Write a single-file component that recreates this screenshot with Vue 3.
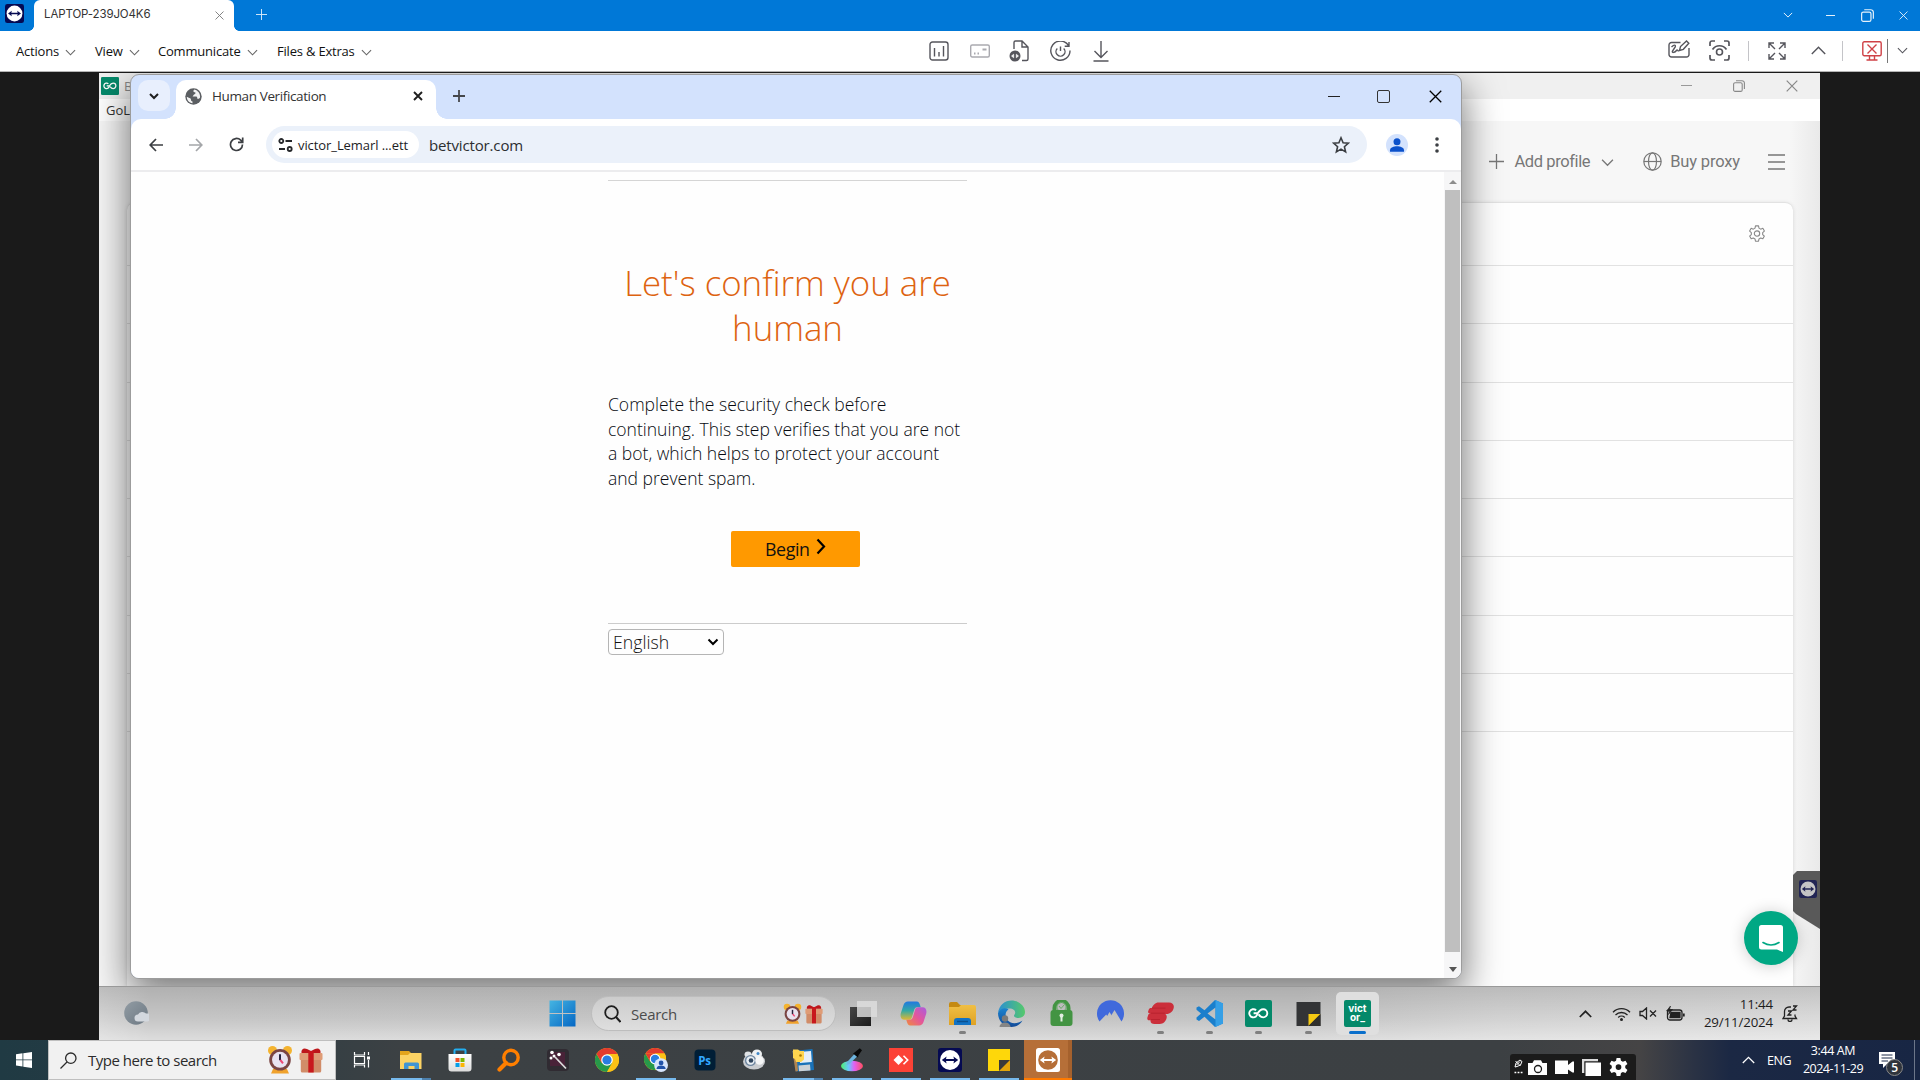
<script setup>
const menus = [
  { label: 'Actions', w: 79 },
  { label: 'View', w: 63 },
  { label: 'Communicate', w: 119 },
  { label: 'Files & Extras', w: 110 },
]
const remoteApps = [
  { icon: 'taskview11' },
  { icon: 'copilot' },
  { icon: 'explorer11', run: true },
  { icon: 'edge' },
  { icon: 'lock' },
  { icon: 'nord' },
  { icon: 'express', run: true },
  { icon: 'vscode', run: true },
  { icon: 'gologin', run: true },
  { icon: 'notedark', run: true },
]
const localApps = [
  { icon: 'taskview10' },
  { icon: 'explorer10', run: true, multi: true },
  { icon: 'store' },
  { icon: 'everything' },
  { icon: 'wand' },
  { icon: 'chrome' },
  { icon: 'chromeuser', run: true },
  { icon: 'photoshop', text: 'Ps' },
  { icon: 'camera3d' },
  { icon: 'floppy', run: true, multi: true },
  { icon: 'picker', run: true },
  { icon: 'anydesk', run: true },
  { icon: 'teamviewer', run: true },
  { icon: 'noteyellow', run: true },
]
</script>

<template>
  <svg class="sprite" width="0" height="0" aria-hidden="true">
    <defs>
      <linearGradient id="gWin" x1="0" y1="0" x2="1" y2="1"><stop offset="0" stop-color="#45b5e2" /><stop offset="1" stop-color="#0567c4" /></linearGradient>
      <linearGradient id="gFold" x1="0" y1="0" x2="0" y2="1"><stop offset="0" stop-color="#f0bf45" /><stop offset="1" stop-color="#dfa224" /></linearGradient>
      <linearGradient id="gEdge" x1="0" y1="0" x2="1" y2="0"><stop offset="0" stop-color="#2b8fd2" /><stop offset="1" stop-color="#55c96b" /></linearGradient>
      <linearGradient id="gEdge2" x1="0" y1="0" x2="0" y2="1"><stop offset="0" stop-color="#1c83cf" /><stop offset="1" stop-color="#124a98" /></linearGradient>
      <linearGradient id="gCopA" x1="0" y1="0" x2="0" y2="1"><stop offset="0" stop-color="#2078e0" /><stop offset=".5" stop-color="#33a9a5" /><stop offset="1" stop-color="#e0b832" /></linearGradient>
      <linearGradient id="gCopB" x1="1" y1="0" x2="0" y2="1"><stop offset="0" stop-color="#a95be0" /><stop offset=".5" stop-color="#e4569b" /><stop offset="1" stop-color="#f08b3c" /></linearGradient>
      <linearGradient id="gMoon" x1="0" y1="0" x2="1" y2="1"><stop offset="0" stop-color="#929ca4" /><stop offset="1" stop-color="#6c7882" /></linearGradient>
      <linearGradient id="gRain" x1="0" y1="0" x2="1" y2="0"><stop offset="0" stop-color="#4ef06f" /><stop offset=".35" stop-color="#67c7ff" /><stop offset=".6" stop-color="#e061f2" /><stop offset="1" stop-color="#ff4d5e" /></linearGradient>
      <linearGradient id="gDark" x1="0" y1="0" x2="1" y2="1"><stop offset="0" stop-color="#454545" /><stop offset="1" stop-color="#1c1c1c" /></linearGradient>
      <linearGradient id="gStore" x1="0" y1="0" x2="0" y2="1"><stop offset="0" stop-color="#fff" /><stop offset="1" stop-color="#dcdcdc" /></linearGradient>
    </defs>

    <symbol id="teamviewer" viewBox="0 0 24 24"><rect width="24" height="24" rx="3" fill="#050a52" /><circle cx="12" cy="12" r="10" fill="#fff" /><path d="M3.8 12 8.6 8.4 8 10.9h8l-.6-2.5L20.2 12l-4.8 3.6.6-2.5H8l.6 2.5z" fill="#050a52" /></symbol>
    <symbol id="tvorange" viewBox="0 0 24 24"><rect width="24" height="24" rx="2.5" fill="#fff" /><circle cx="12" cy="12" r="9.8" fill="#b66f38" /><path d="M3.8 12 8.6 8.4 8 10.9h8l-.6-2.5L20.2 12l-4.8 3.6.6-2.5H8l.6 2.5z" fill="#fff" /></symbol>
    <symbol id="gologin" viewBox="0 0 27 27"><rect width="27" height="27" rx="2" fill="#04896a" /><path d="M8.600 13.300h3.900a4.100 4.100 0 1 1-1.400-3.100M12.500 13.500c1.500-2.500 3-4.300 5.700-4.300a4.100 4.100 0 1 1 0 8.200c-2.200 0-3.400-1.300-4.600-3" fill="none" stroke="#fff" stroke-width="1.900" /></symbol>
    <symbol id="taskview11" viewBox="0 0 27 27"><path d="M0 7h21v19H0z" fill="url(#gDark)" /><path d="M7 1h20v16H7z" fill="#dedede" opacity=".82" /></symbol>
    <symbol id="copilot" viewBox="0 0 27 27"><path d="M8 1.500h8.500c2.500 0 3 2 3.700 4l.5 1.700h-3.500c-2 0-2.700 1.500-3.200 3.300l-2 6.500c-.6 2-1.300 2.800-3.400 2.800H4.500C1 19.800 0 16.500.8 13.300L3.500 5C4.300 2.700 5.600 1.500 8 1.500z" fill="url(#gCopA)" /><path d="M19 25.500h-8.500c-2.500 0-3-2-3.700-4l-.5-1.700h3.500c2 0 2.700-1.500 3.200-3.300l2-6.500c.6-2 1.300-2.800 3.400-2.800h4.100c3.500 0 4.500 3.300 3.700 6.500L23.500 22c-.8 2.300-2.100 3.500-4.500 3.500z" fill="url(#gCopB)" /></symbol>
    <symbol id="explorer11" viewBox="0 0 27 27"><path d="M0 4a2 2 0 0 1 2-2h6l3 3h14v4H0z" fill="#c58a12" /><path d="M0 7h10l2-2h13a2 2 0 0 1 2 2v18H0z" fill="url(#gFold)" /><path d="M5 25v-4a3 3 0 0 1 3-3h11a3 3 0 0 1 3 3v4z" fill="#1272c4" /><path d="M8 21.500h11" stroke="#0b508f" stroke-width="1.500" /></symbol>
    <symbol id="edge" viewBox="0 0 27 27"><path d="M0 13C1 5 7 .5 13.500.5 21 .5 27 6 27 12c0 4-3.500 6-6.500 6-3 0-4.500-1-4.500-2.300 0-1 1.200-1.400 1.200-3.200 0-2-2.200-4-5.700-4C6 8.500 1.500 10 0 13z" fill="url(#gEdge)" /><path d="M0 13c1.500-4 6-5.500 9-4.500 1 .4 1.500 1 1.500 1-3 2-4 6-1.500 10 3 4.500 10 5 15.500 1C22 25 18 27 13.500 27 6 27 0 21 0 13z" fill="url(#gEdge2)" /><circle cx="7" cy="18.500" r="3.200" fill="#7a7a7a" /><path d="M1.500 27a5.500 4.500 0 0 1 11 0z" fill="#858585" /></symbol>
    <symbol id="lock" viewBox="0 0 27 27"><path d="M6.500 11V8a7 7 0 0 1 14 0v3" fill="none" stroke="#439443" stroke-width="4" /><circle cx="13.500" cy="7" r="4.600" fill="none" stroke="#6aa96a" stroke-width="1" /><path d="m11 6 2 2.500 3.500-4" fill="none" stroke="#6aa96a" /><rect x="2.500" y="10" width="22" height="16" rx="3" fill="#439443" /><circle cx="13.500" cy="15.500" r="2" fill="#e3eee3" /><path d="M12.500 16h2v5.500h-2z" fill="#e3eee3" /></symbol>
    <symbol id="nord" viewBox="0 0 27 27"><path d="M2.500 21.500A13.500 13.500 0 1 1 24.500 21.500L17.500 10l-3 5 .5 1-2.500-4-2.300 4-1-1.500z" fill="#4069dc" /></symbol>
    <symbol id="express" viewBox="0 0 27 27"><path d="M11.500 2.500H22c3.500 0 5.400 2.500 4.700 5.500-.8 3.600-3.700 6-7.200 6h-1.200c1.300 1 1.700 2.400 1.300 4-.7 3.200-3.200 6-6.900 6H7.500c-2.600 0-4.300-1.200-4-3.800H2.200C.6 20.200 0 19 .4 17.600l.8-2.500c.4-1.200 1.300-1.900 2.600-1.900H2.300c-1.100 0-1.500-.8-1.100-1.900l.6-1.700c.4-1 1.100-1.500 2.200-1.500h.8C5.900 5 8.400 2.500 11.500 2.500z" fill="#cb2f3b" /><path d="M5 8.100h13.500M3.800 13.200h14M4 19.500h9" fill="none" stroke="#b9232f" stroke-width="1" /></symbol>
    <symbol id="vscode" viewBox="0 0 27 27"><path d="M19 0 8.500 10.300 3 6.200.5 7.500v2.200L5 13.500.5 17.500v2L3 21l5.500-4.300L19 27l8-3.500v-20zM19.500 7.500v12L11.500 13.500z" fill="#1b7fcc" /><path d="m19.500 0 7.500 3.500v20L19.500 27z" fill="#359fe6" /></symbol>
    <symbol id="notedark" viewBox="0 0 27 27"><path d="M1.500 2h24v24h-24z" fill="#333436" /><path d="M13.500 14h12L13.500 26z" fill="#f5c913" /><path d="M25.500 14v12h-12z" fill="#302f2c" /></symbol>
    <symbol id="win11" viewBox="0 0 27 27"><path d="M.5.5h12.500V13H.5zM14 .5h12.500V13H14zM.5 14h12.500v12.500H.5zM14 14h12.500v12.500H14z" fill="url(#gWin)" /></symbol>
    <symbol id="win10" viewBox="0 0 16 16"><path d="m0 2.200 6.500-.9v6.200H0zM7.300 1.200 16 0v7.500H7.300zM0 8.300h6.500v6.200L0 13.600zM7.300 8.300H16V16l-8.700-1.300z" fill="#fff" /></symbol>
    <symbol id="clock" viewBox="0 0 26 28"><circle cx="5.500" cy="4.500" r="4.500" fill="#f4b32f" /><circle cx="20.500" cy="4.500" r="4.500" fill="#f4b32f" /><path d="M4 27.500 6 23h14l2 4.500z" fill="#f0a22c" /><circle cx="13" cy="13.800" r="10.800" fill="#7a4443" /><circle cx="13" cy="13.800" r="8" fill="#e8e2f0" /><path d="M13 8.300v6" stroke="#28243f" stroke-width="2" /><path d="m13.300 14 2.700 3.300" stroke="#ed4774" stroke-width="2" /></symbol>
    <symbol id="gift" viewBox="0 0 24 26"><path d="M1.800 10h20.400v14a1.500 1.500 0 0 1-1.500 1.500H3.300A1.500 1.500 0 0 1 1.800 24z" fill="#d18c68" /><rect x=".5" y="6" width="23" height="7" rx="1" fill="#df9c76" /><path d="M2.500 6C1.800 2 5 .5 8 2l4 2 4-2c3-1.500 6.200 0 5.500 4z" fill="#bd171b" /><path d="M9.300 4h5.400v21.500H9.300z" fill="#c8191d" /></symbol>
    <symbol id="taskview10" viewBox="0 0 24 24"><path d="M4.500 4v3h10V4M4.500 19.500V17h10v2.500M4.500 8.500h10v7h-10zM18.500 4v3M18.500 12v7.500" fill="none" stroke="#fff" stroke-width="1.200" /><path d="M17 8.500h3v3h-3z" fill="#fff" /></symbol>
    <symbol id="explorer10" viewBox="0 0 24 24"><path d="M1 3h9l2 2h10v6H1z" fill="#e4a51c" /><path d="M1 7h8l2-2h11.500v16H1z" fill="#fcd364" /><path d="M5 21v-5a1.500 1.500 0 0 1 1.500-1.500h12A1.500 1.500 0 0 1 20 16v5h-4.500v-3h-6v3z" fill="#4095d4" /></symbol>
    <symbol id="store" viewBox="0 0 24 24"><path d="M6.500 6.500V2.500a1 1 0 0 1 1-1h9a1 1 0 0 1 1 1v4" fill="none" stroke="#23aef0" stroke-width="2" /><path d="M.5 6h23v14.500a3 3 0 0 1-3 3h-17a3 3 0 0 1-3-3z" fill="url(#gStore)" /><path d="M7.500 10h4v4h-4z" fill="#f2502a" /><path d="M12.500 10h4v4h-4z" fill="#7db800" /><path d="M7.500 15h4v4h-4z" fill="#069fe8" /><path d="M12.500 15h4v4h-4z" fill="#fbb605" /></symbol>
    <symbol id="everything" viewBox="0 0 24 24"><circle cx="14" cy="9.500" r="7.200" fill="none" stroke="#ff7f00" stroke-width="3.400" /><path d="m9 15-6.500 6.500" stroke="#ff7f00" stroke-width="4.200" stroke-linecap="round" /></symbol>
    <symbol id="wand" viewBox="0 0 24 24"><rect x="1" y="1" width="22" height="22" rx="4" fill="#302b32" /><path d="M4 4h15v14H4z" fill="#5a1c3c" opacity=".6" /><path d="m9 9 11 11.500" stroke="#dcdcdc" stroke-width="1.800" /><circle cx="8" cy="8" r="1.500" fill="#fff" /><circle cx="13" cy="6.500" r="1.800" fill="#fff" /><circle cx="5" cy="10" r="1.500" fill="#fff" /><circle cx="6" cy="4.500" r="1.800" fill="#fff" /></symbol>
    <symbol id="chrome" viewBox="0 0 24 24"><circle cx="12" cy="12" r="12" fill="#fbc116" /><path d="M1.600 6A12 12 0 0 1 22.400 6H12z" fill="#e33b2e" /><path d="M1.600 6a12 12 0 0 0 10.400 18l5.200-9L12 6 6.800 15z" fill="#27994a" /><path d="M22.400 6H12l5.200 9L12 24A12 12 0 0 0 22.400 6z" fill="#fbc116" /><path d="M1.600 6 6.800 15 12 6z" fill="#e33b2e" /><circle cx="12" cy="12" r="5.800" fill="#fff" /><circle cx="12" cy="12" r="4.600" fill="#2a7de1" /></symbol>
    <symbol id="chromeuser" viewBox="0 0 26 26"><use href="#chrome" width="24" height="24" /><circle cx="18.500" cy="18.500" r="7.500" fill="#d7e5fc" /><circle cx="18.500" cy="16.200" r="2.600" fill="#2152a9" /><path d="M13.500 22.800c0-2.600 2.500-3.800 5-3.800s5 1.200 5 3.800z" fill="#2152a9" /></symbol>
    <symbol id="photoshop" viewBox="0 0 24 24"><rect x="1.500" y="1.500" width="21" height="21" rx="4" fill="#001e36" /></symbol>
    <symbol id="camera3d" viewBox="0 0 24 24"><ellipse cx="12" cy="13.500" rx="11" ry="8" fill="#c9ccd0" /><ellipse cx="15" cy="6" rx="5" ry="4.500" fill="#eef0f2" /><ellipse cx="6" cy="6.500" rx="3.500" ry="3" fill="#dfe2e5" /><circle cx="8.500" cy="12.500" r="5.600" fill="#6e86a0" /><circle cx="8.500" cy="12.500" r="4.200" fill="#e8eef3" /><circle cx="9" cy="12.500" r="2.300" fill="#30465f" /><ellipse cx="17.500" cy="12.500" rx="4.300" ry="4.300" fill="#f5f6f7" /><circle cx="16" cy="5.500" r="1.500" fill="#4087c7" /></symbol>
    <symbol id="floppy" viewBox="0 0 24 24"><path d="m1.500 3 20-2 1.500 21-18 1.500z" fill="#1a72b8" /><path d="m8 4 12-1 .8 11L9 15z" fill="#e5eff8" /><path d="M7.500 17.500 19 16.500l.5 6-11.500.8z" fill="#cdd2d6" /><path d="m1.500 3 3.500-.4L7 23l-2.500.4z" fill="#b4854f" /><path d="M2 1.500h5L9 3h4v8.500l-3 2.500H5l-1-3-2-1z" fill="#ffd64f" /><circle cx="9.500" cy="7.500" r="1.300" fill="#a87800" /></symbol>
    <symbol id="picker" viewBox="0 0 24 24"><ellipse cx="12" cy="18" rx="11" ry="5.200" fill="url(#gRain)" /><path d="m6.500 17 .8-3.200L14.500 6l2.600 2.600-7.600 7.500z" fill="#6db5e0" /><path d="m13 5.500 1.800-1.300 5-4 2.200 2-3.500 5-.5 2.300z" fill="#090909" /></symbol>
    <symbol id="anydesk" viewBox="0 0 24 24"><path d="M0 0h24v24H0z" fill="#fc4236" /><path d="m9.500 7 5 5-5 5-5-5z" fill="#fff" /><path d="m13 7.800 4.200 4.200-4.200 4.200" fill="none" stroke="#fff" stroke-width="1.600" transform="translate(1.500)" /></symbol>
    <symbol id="noteyellow" viewBox="0 0 24 24"><path d="M1 1h22v22H1z" fill="#fed70a" /><path d="M12 12h11v11H12z" fill="#e3a50a" /><path d="M12 12h11L12 23z" fill="#39393a" /></symbol>
    <symbol id="chev" viewBox="0 0 12 12"><path d="m1 3.500 5 5 5-5" fill="none" stroke="currentColor" stroke-width="1.200" /></symbol>
    <symbol id="x" viewBox="0 0 12 12"><path d="m.7.700 10.600 10.600M11.300.7.700 11.300" fill="none" stroke="currentColor" stroke-width="1.200" /></symbol>
    <symbol id="plus" viewBox="0 0 14 14"><path d="M7 0v14M0 7h14" fill="none" stroke="currentColor" stroke-width="1.200" /></symbol>
    <symbol id="restore" viewBox="0 0 12 12"><rect x=".6" y="2.800" width="8.600" height="8.600" rx="1.500" fill="none" stroke="currentColor" stroke-width="1.100" /><path d="M3 .7h6a2.400 2.400 0 0 1 2.400 2.400V9" fill="none" stroke="currentColor" stroke-width="1.100" /></symbol>
    <symbol id="gear" viewBox="0 0 20 20"><path d="M8.300 1h3.400l.5 2.500 1.900 1.100 2.400-.9 1.700 3-1.900 1.700v2.200l1.900 1.700-1.700 3-2.400-.9-1.900 1.100-.5 2.500H8.300l-.5-2.500-1.900-1.100-2.400.9-1.700-3 1.900-1.700V8.400L1.800 6.700l1.700-3 2.400.9 1.900-1.100z" fill="none" stroke="currentColor" stroke-width="1.200" stroke-linejoin="round" /><circle cx="10" cy="9.500" r="3" fill="none" stroke="currentColor" stroke-width="1.200" /></symbol>
  </svg>

  <div class="screen">
    <header class="tvbar">
      <svg class="tvlogo" width="19" height="19"><use href="#teamviewer" /></svg>
      <div class="tvtab"><span class="laptop">LAPTOP-239JO4K6</span><svg width="9" height="9"><use href="#x" /></svg></div>
      <svg class="tvplus" width="11" height="11"><use href="#plus" /></svg>
      <div class="tvctl">
        <svg width="10" height="10"><use href="#chev" /></svg>
        <i class="dash"></i>
        <svg width="13" height="13"><use href="#restore" /></svg>
        <svg width="9" height="9"><use href="#x" /></svg>
      </div>
    </header>

    <nav class="tvtools">
      <div class="menus">
        <div v-for="m in menus" :key="m.label" class="menu" :style="{ width: m.w + 'px' }">{{ m.label }}<svg width="11" height="11"><use href="#chev" /></svg></div>
      </div>
      <div class="mid">
        <svg width="20" height="20" viewBox="0 0 20 20"><rect x="1" y="1" width="18" height="18" rx="2.500" /><path d="M5.500 7v8.500M10 11v4.500M14.500 5v10.500" /></svg>
        <svg class="pale" width="20" height="20" viewBox="0 0 20 20"><rect x=".7" y="4" width="18.600" height="12" rx="1.500" /><path d="M4 12.500h1.500M7.500 12.500H9M12.500 8.500h4" stroke-width="2" /></svg>
        <svg width="20" height="22" viewBox="0 0 20 22"><path d="M5 9V2.500A1.500 1.500 0 0 1 6.500 1H13l6 6v12a1.500 1.500 0 0 1-1.500 1.500H13M13 1v6h6" /><circle cx="6" cy="16" r="5.500" fill="#55555c" stroke="none" /><path d="m2.500 16 2.200-1.800v3.600zM9.500 16l-2.200-1.800v3.600z" fill="#fff" stroke="#fff" stroke-width=".6" /></svg>
        <svg width="21" height="21" viewBox="0 0 21 21"><path d="M18.500 4.500A9.600 9.600 0 1 0 20 9.500M19 1v4.300h-4.300M7.300 7.500a4.500 4.500 0 1 0 6.400 0M10.500 5.500V10" /></svg>
        <svg width="16" height="21" viewBox="0 0 16 21"><path d="M8 0v16M1.500 10 8 16.500 14.500 10M.5 20h15" /></svg>
      </div>
      <div class="right">
        <svg class="wb" width="22" height="19" viewBox="0 0 22 19"><path d="M12.500 2.500h-9A2.500 2.500 0 0 0 1 5v9.500A2.500 2.500 0 0 0 3.500 17h15a2.500 2.500 0 0 0 2.500-2.500V8M3.500 7c3.500-3.500 5-1.500 3 1L4.500 11c-1 2 2.200 1.800 3.500 0s1.800-.8 2.500.3M11.500 10.500l1-4L18.500 1l2.300 2.300-5.500 6z" /></svg>
        <svg class="eye" width="21" height="21" viewBox="0 0 21 21"><path d="M1 6V3a2 2 0 0 1 2-2h3M15 1h3a2 2 0 0 1 2 2v3M20 15v3a2 2 0 0 1-2 2h-3M6 20H3a2 2 0 0 1-2-2v-3M3.500 9.500c3.500-5 10.500-5 14 0" stroke-width="1.700" /><circle cx="10.500" cy="12" r="3" stroke-width="1.600" /></svg>
        <i class="vr"></i>
        <svg class="full" width="18" height="18" viewBox="0 0 18 18"><path d="M1 6V1h5M1 1l6 6M12 1h5v5M17 1l-6 6M17 12v5h-5M17 17l-6-6M6 17H1v-5M1 17l6-6" /></svg>
        <svg class="up" width="15" height="9" viewBox="0 0 15 9"><path d="m.8 8 6.700-6.700L14.200 8" /></svg>
        <i class="vr"></i>
        <svg class="mon" width="20" height="20" viewBox="0 0 20 20"><rect x=".8" y=".8" width="18.400" height="14" rx="1.500" /><path d="m5.500 3.500 9 9M14.500 3.500l-9 9M7.500 15v3.500M12.500 15v3.500M4.500 19h11" /></svg>
        <i class="vr dark"></i>
        <svg class="dn" width="11" height="11"><use href="#chev" /></svg>
      </div>
    </nav>

    <main class="remote">
      <div class="desktop">
        <section class="golo">
          <div class="gotitle">
            <svg width="18" height="18"><use href="#gologin" /></svg><span>Browser</span>
            <div class="goctl"><i class="dash"></i><svg width="12" height="12"><use href="#restore" /></svg><svg width="12" height="12"><use href="#x" /></svg></div>
          </div>
          <div class="gomenu">GoLogin</div>
          <div class="gobody">
            <div class="gobar">
              <svg width="15" height="15"><use href="#plus" /></svg><span class="addp">Add profile</span><svg class="gochev" width="13" height="13"><use href="#chev" /></svg>
              <svg class="globe" width="19" height="19" viewBox="0 0 19 19"><circle cx="9.500" cy="9.500" r="8.700" /><ellipse cx="9.500" cy="9.500" rx="4" ry="8.700" /><path d="M1 9.500h17" /></svg><span class="buyp">Buy proxy</span>
              <svg class="burger" width="17" height="16" viewBox="0 0 17 16"><path d="M0 1h17M0 8h17M0 15h17" /></svg>
            </div>
            <div class="card">
              <div class="row first"><svg width="18" height="18"><use href="#gear" /></svg></div>
              <div v-for="n in 8" :key="n" class="row"></div>
            </div>
          </div>
          <div class="tvside"><svg width="18" height="18"><use href="#teamviewer" /></svg></div>
          <div class="chat"><svg width="24" height="27" viewBox="0 0 24 27"><path d="M2.500 0h19A2.500 2.500 0 0 1 24 2.500V27l-6-2.500H2.500A2.500 2.500 0 0 1 0 22V2.500A2.500 2.500 0 0 1 2.500 0z" fill="#fff" /><path d="M4 17.500q8 5 16 0" fill="none" stroke="#00a884" stroke-width="1.600" stroke-linecap="round" /></svg></div>
        </section>

        <section class="browser">
          <div class="strip">
            <div class="drop"><svg width="12" height="12" viewBox="0 0 12 12"><path d="m2 4 4 4 4-4" fill="none" stroke="#1f1f1f" stroke-width="2" /></svg></div>
            <div class="tab">
              <svg width="17" height="17" viewBox="0 0 17 17"><circle cx="8.500" cy="8.500" r="8.200" fill="#5b5e62" /><path d="M9.500 1.500C7.500 3 8.500 4 10 4.300c1 .4.5 1.700-.5 1.900-1.300.3-1 1.800-2 2.300h3.300c1 0 1.500.7 1.500 1.700 0 1 1 .8 1.800.4.600-.3 1-.9 1-1.600C15.200 5.500 13 2.500 9.500 1.500zM1.800 8.800c0 3.400 2.500 6.200 5.700 6.500v-1.800c-1 0-1.500-.8-1.500-1.700 0-1.800-1.500-1.300-2.200-2z" fill="#fff" opacity=".92" /></svg>
              <span>Human Verification</span>
              <svg class="tx" width="10" height="10" viewBox="0 0 10 10"><path d="m1 1 8 8M9 1 1 9" stroke="#1f1f1f" stroke-width="1.900" /></svg>
            </div>
            <svg class="newtab" width="12" height="12" viewBox="0 0 12 12"><path d="M6 0v12M0 6h12" stroke="#45474b" stroke-width="1.800" /></svg>
            <div class="winctl">
              <i></i><b></b><svg width="13" height="13"><use href="#x" /></svg>
            </div>
          </div>
          <div class="toolbar">
            <svg width="14" height="14" viewBox="0 0 14 14"><path d="M14 7H1.500M7 1 1.200 7 7 13" fill="none" stroke="#3c3f43" stroke-width="1.700" /></svg>
            <svg class="fw" width="14" height="14" viewBox="0 0 14 14"><path d="M0 7h12.500M7 1l5.800 6L7 13" fill="none" stroke="#a4a6a9" stroke-width="1.700" /></svg>
            <svg class="rl" width="15" height="15" viewBox="0 0 15 15"><path d="M13.500 7.500a6 6 0 1 1-1.800-4.300L13.500 5M13.700.5V5.300H9" fill="none" stroke="#3c3f43" stroke-width="1.700" /></svg>
            <div class="omni">
              <div class="chip"><svg width="15" height="14" viewBox="0 0 15 14"><g fill="none" stroke="#26282b" stroke-width="1.800"><circle cx="3.300" cy="3" r="2" /><path d="M7.500 3H14M1 11h6" /><circle cx="11.700" cy="11" r="2" /></g></svg><span>victor_Lemarl ...ett</span></div>
              <span class="url">betvictor.com</span>
              <svg class="star" width="18" height="18" viewBox="0 0 18 18"><path d="m9 1.800 2.100 4.900 5.300.5-4 3.500 1.200 5.200L9 13.100l-4.600 2.800 1.200-5.200-4-3.500 5.300-.5z" fill="none" stroke="#3c3f43" stroke-width="1.600" /></svg>
            </div>
            <svg class="avatar" width="22" height="22" viewBox="0 0 22 22"><circle cx="11" cy="11" r="11" fill="#d3e2fd" /><circle cx="11" cy="7.800" r="3.500" fill="#0b51cb" /><path d="M4 17.800v-1.500c0-3 4-4 7-4s7 1 7 4v1.500z" fill="#0b51cb" /></svg>
            <svg class="dots" width="4" height="16" viewBox="0 0 4 16"><g fill="#3c3f43"><circle cx="2" cy="2" r="1.800" /><circle cx="2" cy="8" r="1.800" /><circle cx="2" cy="14" r="1.800" /></g></svg>
          </div>
          <div class="view">
            <div class="page">
              <div class="box">
                <h1>Let's confirm you are<br>human</h1>
                <p>Complete the security check before<br>continuing. This step verifies that you are not<br>a bot, which helps to protect your account<br>and prevent spam.</p>
                <button>Begin<svg width="10" height="17" viewBox="0 0 10 17"><path d="m1.500 1.500 6.500 7-6.500 7" fill="none" stroke="#000" stroke-width="2.200" /></svg></button>
              </div>
              <div class="select">English<svg width="12" height="12" viewBox="0 0 12 12"><path d="m1.500 3.500 4.500 4.500 4.500-4.500" fill="none" stroke="#000" stroke-width="2" /></svg></div>
            </div>
            <div class="scroll"><i class="au"></i><div class="thumb"></div><i class="ad"></i></div>
          </div>
        </section>

        <footer class="bar11">
          <svg class="weather" width="25" height="25" viewBox="0 0 25 25"><circle cx="12" cy="12" r="11.800" fill="url(#gMoon)" /><path d="M14 20.500a3.500 3.500 0 0 1 0-7 5 5 0 0 1 8-1 4 4 0 0 1 1.500 8z" fill="#d3d8de" /></svg>
          <svg class="start11" width="27" height="27"><use href="#win11" /></svg>
          <div class="search11">
            <svg width="17" height="18" viewBox="0 0 17 18"><circle cx="7.500" cy="7.500" r="6.300" fill="none" stroke="#1d1d1d" stroke-width="1.800" /><path d="m12 12 4.500 5" stroke="#1d1d1d" stroke-width="2" /></svg>
            <span>Search</span>
            <svg class="ck" width="19" height="22"><use href="#clock" /></svg><svg width="18" height="20"><use href="#gift" /></svg>
          </div>
          <div class="apps11">
            <div v-for="a in remoteApps" :key="a.icon" class="cell11"><svg width="27" height="27"><use :href="'#' + a.icon" /></svg><i v-if="a.run"></i></div>
            <div class="cell11 on"><div class="vict">vict<br>or_</div><i></i></div>
          </div>
          <div class="tray11">
            <svg class="tc" width="13" height="8" viewBox="0 0 13 8"><path d="m.8 7 5.700-5.700L12.200 7" stroke-width="1.700" /></svg>
            <svg class="wifi" width="19" height="14" viewBox="0 0 19 14"><path d="M1 5.200a12 12 0 0 1 17 0M3.500 8a8.500 8.500 0 0 1 12 0M6.200 10.500a4.800 4.800 0 0 1 6.600 0" /><circle cx="9.500" cy="12.500" r="1.500" fill="#222" stroke="none" /></svg>
            <svg class="vol" width="18" height="13" viewBox="0 0 18 13"><path d="M1 4.500v4h2.500L7.500 12V1L3.500 4.500zM11 3.500l6 6M17 3.500l-6 6" /></svg>
            <svg class="bat" width="19" height="15" viewBox="0 0 19 15"><rect x="1.500" y="4" width="14.500" height="10" rx="2.500" /><path d="M5 6.500h9v5H4z" fill="#222" /><path d="M17.800 7.500v3" stroke-width="1.800" /><path d="M4.500 0 .5 5h3L2.500 8.500 6.500 3.500h-3z" fill="#222" stroke="#222" stroke-width=".6" /></svg>
            <div class="time11">11:44<br><span>29/11/2024</span></div>
            <svg class="bell" width="17" height="17" viewBox="0 0 17 17"><path d="M9 2H7a4.500 4.500 0 0 0-4.500 4.500V11L1 13.500h13.500L13 11V9.500M6 14.500a2 2 0 0 0 4 0M6 6h3.500L6 10h3.500M11 1h3.500L11 5h3.500" /></svg>
          </div>
        </footer>
      </div>
    </main>

    <footer class="bar10">
      <div class="start10"><svg width="16" height="16"><use href="#win10" /></svg></div>
      <div class="search10">
        <svg width="17" height="17" viewBox="0 0 17 17"><circle cx="10.800" cy="6.200" r="5.200" fill="none" stroke="#2b2b2b" stroke-width="1.300" /><path d="M7 10 .5 16.500" stroke="#2b2b2b" stroke-width="1.300" /></svg>
        <span>Type here to search</span>
        <svg class="ck" width="26" height="28"><use href="#clock" /></svg><svg width="24" height="26"><use href="#gift" /></svg>
      </div>
      <div class="apps10">
        <div v-for="a in localApps" :key="a.icon" class="cell10" :class="{ run: a.run, multi: a.multi }"><svg width="24" height="24"><use :href="'#' + a.icon" /></svg><b v-if="a.text">{{ a.text }}</b></div>
        <div class="cell10 active"><svg width="24" height="24"><use href="#tvorange" /></svg></div>
      </div>
      <div class="capture">
        <svg class="pen" width="9" height="17" viewBox="0 0 9 17"><path d="M1 8 2 4l4-3 2 1.500L6.500 6 3 7.500zM2.500 6 6 2.500M1.500 2l5 5" fill="none" stroke="#fff" stroke-width="1" /><path d="M.5 13.500h1.800M3.600 13.500h1.800M6.700 13.500h1.800" stroke="#fff" stroke-width="1.600" /></svg>
        <svg width="19" height="15" viewBox="0 0 19 15"><path d="M0 3h4.500L6 .3h7L14.500 3H19v12H0z" fill="#fff" /><circle cx="10" cy="9" r="3.500" fill="none" stroke="#1c1c1c" stroke-width="1.300" /></svg>
        <svg width="19" height="14" viewBox="0 0 19 14"><path d="M0 .5h13V5l4.500-3.500H19v11h-1.500L13 9.500v4.500H0z" fill="#fff" /></svg>
        <svg width="19" height="17" viewBox="0 0 19 17"><path d="M0 0h16v2.300H2.300V14H0z" fill="#ddd" /><path d="M3.500 3.500H19V17H3.500z" fill="#fff" /></svg>
        <svg width="19" height="19" viewBox="0 0 20 20"><path d="M8 0h4l.6 3 2 1 2.800-1 2 3.200-2.300 2v2.400l2.300 2-2 3.200-2.800-1-2 1-.6 3.200H8l-.6-3.200-2-1-2.800 1-2-3.200 2.300-2V8.200L.6 6.200 2.600 3l2.800 1 2-1z" fill="#fff" /><circle cx="10" cy="9.500" r="3" fill="#1c1c1c" /></svg>
      </div>
      <div class="tray10">
        <svg class="tc" width="13" height="8" viewBox="0 0 13 8"><path d="m.8 7 5.700-5.700L12.200 7" fill="none" stroke="#fff" stroke-width="1.300" /></svg>
        <span class="eng">ENG</span>
        <div class="time10">3:44 AM<br><span>2024-11-29</span></div>
        <div class="notif"><svg width="16" height="16" viewBox="0 0 16 16"><path d="M0 0h16v12H8l-4 4v-4H0z" fill="#fff" /><path d="M2.500 3h11M2.500 6h11M2.500 9H9" stroke="#1a2846" /></svg><b>5</b></div>
      </div>
    </footer>
  </div>
</template>

<style>
body { margin: 0; overflow: hidden; }
</style>

<style scoped>
* { box-sizing: border-box; }
svg { flex: none; display: block; }
.sprite { position: absolute; }
.screen { width: 1920px; height: 1080px; display: flex; flex-direction: column; overflow: hidden; font-family: "Open Sans", "Noto Sans", sans-serif; white-space: nowrap; }

.tvbar { height: 31px; flex: none; background: #0078d7; display: flex; align-items: center; color: #fff; }
.tvlogo { margin: -4px 0 0 5px; }
.tvtab { position: relative; width: 200px; height: 31px; margin-left: 10px; background: #fff; border-radius: 6px 6px 0 0; display: flex; align-items: center; padding: 0 10px 3px 10px; justify-content: space-between; color: #777; }
.tvtab svg { margin-top: 2px; }
.tvtab::before, .tvtab::after { content: ""; position: absolute; bottom: 0; width: 5px; height: 5px; left: -5px; background: radial-gradient(circle at 0 0, transparent 4.500px, #fff 5px); }
.tvtab::after { left: auto; right: -5px; background: radial-gradient(circle at 100% 0, transparent 4.500px, #fff 5px); }
.laptop { font: 11.500px Inter, sans-serif; color: #333; letter-spacing: -.12px; }
.tvplus { margin-left: 22px; margin-top: -2px; opacity: .85; }
.tvctl { margin-left: auto; display: flex; align-items: center; padding: 0 12px 1px 0; opacity: .9; }
.tvctl .dash { width: 9px; height: 1px; background: #fff; margin: 0 26px 0 33px; }
.tvctl svg:nth-child(4) { margin-left: 25px; }

.tvtools { height: 42px; flex: none; background: #fff; border-bottom: 1px solid #1a1a1a; box-shadow: inset 0 -1px #b5b5b5; position: relative; display: flex; justify-content: space-between; align-items: center; font-size: 13px; letter-spacing: -.2px; color: #111; padding-bottom: 2px; }
.menus { display: flex; padding-left: 16px; }
.menu { display: flex; align-items: center; gap: 6px; }
.menu svg { color: #666; margin-top: 3px; }
.mid { position: absolute; left: 929px; top: 8px; height: 24px; display: flex; align-items: center; gap: 21px; }
.mid svg:nth-child(3) { margin-left: -2px; }
.mid svg:nth-child(5) { margin-left: 1px; }
.mid svg, .right svg { fill: none; stroke: #55555c; stroke-width: 1.400; }
.mid .pale { stroke: #aaaab0; }
.right { display: flex; align-items: center; color: #55555c; }
.vr { width: 1px; height: 20px; background: #c4c4c8; }
.vr.dark { height: 24px; background: #777; margin: 0 9px 0 7px; }
.eye { margin: 0 20px 0 19px; }
.full { margin: 0 25px 0 17px; }
.up { margin-right: 18px; }
.right .mon { margin-left: 17px; stroke: #cf4247; }
.dn { margin-right: 12px; }
.right .wb { position: relative; top: -1px; left: 2px; }
.eye, .full, .up, .mon { position: relative; left: 2px; }

.remote { height: 967px; flex: none; background: #1a1a1a; padding-left: 99px; }
.desktop { position: relative; width: 1721px; height: 967px; background: #f6f6f6; overflow: hidden; display: flex; flex-direction: column; }
.golo { height: 913px; display: flex; flex-direction: column; flex: none; position: relative; }
.gotitle { height: 26px; background: #f0f0f0; display: flex; align-items: center; padding: 0 0 1px 2px; font-size: 13px; color: #888; flex: none; }
.gotitle span { margin-left: 5px; }
.goctl { margin-left: auto; display: flex; align-items: center; color: #888; padding-right: 22px; }
.goctl .dash { width: 11px; height: 1px; background: #999; margin-right: 41px; }
.goctl svg { margin-right: 41px; }
.goctl svg:last-child { margin-right: 0; }
.gomenu { height: 22px; flex: none; background: #fff; padding-left: 7px; font-size: 13px; line-height: 22px; color: #333; }
.gobody { flex: 1; display: flex; flex-direction: column; padding: 0 27px 0 28px; background: linear-gradient(90deg, #f7f7f7 0, #f7f7f7 1690px, #e9e9e9 1721px); }
.gobar { height: 81px; flex: none; display: flex; align-items: center; justify-content: flex-end; color: #777; font: 16.500px Roboto, sans-serif; padding-right: 8px; }
.addp { margin-left: 10px; letter-spacing: -.4px; }
.gochev { margin: 2px 29px 0 11px; }
.globe { fill: none; stroke: #777; stroke-width: 1.200; margin-right: 8px; }
.burger { stroke: #777; stroke-width: 1.500; margin-left: 28px; }
.buyp { letter-spacing: -.15px; }
.card { flex: 1; background: #fefefe; border-top: 1px solid #e2e2e2; border-radius: 8px 8px 0 0; box-shadow: 0 1px 4px #0002; }
.row { height: 58.250px; border-bottom: 1px solid #e2e2e2; }
.row.first { height: 63px; display: flex; justify-content: flex-end; align-items: center; padding-right: 27px; color: #888; }
.tvside { position: absolute; right: 0; top: 798px; width: 27px; height: 58px; background: #595959; clip-path: polygon(4px 0, 100% 0, 100% 100%, 3px 43px, 0 40px, 0 4px); padding: 9px 0 0 6px; }
.tvside svg { opacity: .65; }
.chat { position: absolute; left: 1645px; top: 838px; width: 54px; height: 54px; border-radius: 50%; background: #00a884; box-shadow: 0 1px 16px #0003; display: flex; align-items: center; justify-content: center; }

.browser { position: absolute; left: 31px; top: 1px; width: 1332px; height: 905px; border: 1px solid #9c9c9c; border-radius: 9px; background: #d3e2fd; overflow: hidden; display: flex; flex-direction: column; box-shadow: 0 14px 38px 2px #0008; z-index: 1; }
.strip { height: 44px; flex: none; display: flex; align-items: flex-start; padding: 5px 0 0 7px; }
.drop { width: 32px; height: 31px; border-radius: 10px; background: #e8effd; display: flex; align-items: center; justify-content: center; }
.tab { position: relative; width: 260px; height: 39px; margin-left: 6px; background: #fff; border-radius: 10px 10px 0 0; display: flex; align-items: center; padding: 0 13px 7px 9px; font-size: 13.500px; color: #333; letter-spacing: -.38px; }
.tab::before, .tab::after { content: ""; position: absolute; bottom: 0; width: 11px; height: 11px; left: -11px; background: radial-gradient(circle at 0 0, transparent 10.500px, #fff 11px); }
.tab::after { left: auto; right: -11px; background: radial-gradient(circle at 100% 0, transparent 10.500px, #fff 11px); }
.tab span { margin-left: 10px; }
.tx { margin-left: auto; }
.newtab { margin: 10px 0 0 17px; }
.winctl { margin-left: auto; display: flex; align-items: center; height: 32px; padding-right: 19px; }
.winctl i { width: 12px; height: 1px; background: #222; }
.winctl b { width: 13px; height: 13px; border: 1px solid #333; border-radius: 2px; margin: 0 39px 0 37px; }
.toolbar { height: 53px; flex: none; background: #fff; border-bottom: 2px solid #ececee; border-radius: 10px 10px 0 0; display: flex; align-items: center; padding-left: 18px; }
.fw { margin-left: 26px; }
.rl { margin-left: 26px; }
.omni { width: 1101px; height: 37px; border-radius: 19px; margin-left: 22px; background: #ebf1fa; display: flex; align-items: center; padding: 0 17px 0 6px; }
.chip { width: 147px; height: 27px; border-radius: 14px; background: #fff; display: flex; align-items: center; padding-left: 6px; font-size: 13px; font-weight: 500; letter-spacing: -.08px; color: #1d1d1f; }
.chip span { margin-left: 5px; }
.url { margin-left: 10px; font-size: 15px; color: #2c2e31; letter-spacing: -.15px; }
.star { margin-left: auto; }
.avatar { margin-left: 19px; }
.dots { margin-left: 27px; }
.view { flex: 1; display: flex; background: #fefefe; }
.page { width: 359px; margin-left: 477px; padding-top: 8px; }
.box { border-top: 1px solid #d5d5d5; border-bottom: 1px solid #ccc; height: 444px; display: flow-root; }
.page h1 { margin: 79px 0 0; font-weight: 300; font-size: 34.800px; line-height: 45px; color: #dd6310; text-align: center; }
.page p { margin: 42px 0 0; font-size: 17.530px; font-weight: 300; line-height: 24.700px; color: #070a10; }
button { display: flex; align-items: center; width: 129px; height: 36px; margin: 40px 0 0 123px; border: 0; border-radius: 2px; background: #ff9900; font: 17.800px "Open Sans", sans-serif; letter-spacing: -.4px; padding: 0 0 0 34px; color: #111; }
button svg { margin: -5px 0 0 6px; }
.select { margin-top: 5px; width: 116px; height: 26px; border: 1px solid #b5b5b5; border-radius: 4px; display: flex; align-items: center; justify-content: space-between; padding: 0 4px 0 4px; font-size: 17.700px; font-weight: 300; color: #111; }
.scroll { margin-left: auto; width: 17px; background: #f6f6f7; display: flex; flex-direction: column; align-items: center; padding: 8px 0 6px; }
.au, .ad { border: 4px solid transparent; border-top: 0; border-bottom: 4px solid #8c8c8c; }
.ad { border-bottom: 0; border-top: 5px solid #555; margin-top: 15px; }
.thumb { width: 15px; flex: 1; background: #bfbfbf; margin-top: 6px; }

.bar11 { position: relative; z-index: 2; height: 54px; flex: none; background: linear-gradient(#0000001c, #0000 60%, #fff6), linear-gradient(90deg, #d4d4d4 0, #c6c6c6 50px, #c4c4c4 1200px, #d2d2d2 1400px, #dadada 1721px); border-top: 1px solid #999; display: flex; align-items: center; }
.weather { margin-left: 25px; }
.start11 { margin-left: 400px; }
.search11 { width: 245px; height: 35px; margin-left: 15px; border-radius: 18px; border: 1px solid #bdbdbd; background: linear-gradient(#ccc, #dedede); display: flex; align-items: center; padding: 0 12px 0 12px; font-size: 15px; color: #4c4c4c; }
.search11 > span { margin-left: 10px; letter-spacing: -.25px; }
.ck { margin-left: auto; margin-right: 3px; }
.apps11 { display: flex; margin-left: 3px; }
.cell11 { width: 49.400px; height: 43px; display: flex; align-items: center; flex-direction: column; padding-top: 8px; }
.cell11 i { width: 7px; height: 3px; border-radius: 2px; background: #808080; margin-top: 4px; }
.cell11.on { width: 43px; margin-left: 3px; border-radius: 5px; background: #dfdfdf; }
.cell11.on i { width: 17px; background: #0a6fcb; }
.vict { width: 27px; height: 27px; border-radius: 2px; background: #04896a; color: #fff; font: bold 10px/9px Inter, sans-serif; text-align: center; padding-top: 4px; }
.tray11 { margin-left: auto; display: flex; align-items: center; padding-right: 21px; }
.tray11 svg { fill: none; stroke: #222; stroke-width: 1.300; }
.tray11 .tc { margin-right: 20px; }
.wifi { margin-right: 8px; }
.vol { margin-right: 9px; }
.time11 { width: 76px; margin: 0 9px 0 12px; text-align: right; font-size: 13.300px; line-height: 18px; color: #1d1d1d; letter-spacing: -.15px; padding-bottom: 2px; }

.bar10 { height: 40px; flex: none; display: flex; align-items: stretch; background: linear-gradient(90deg, #203a43 0, #263b44 150px, #3c4144 400px, #3c4043 1500px, #454445 1640px, #2a3244 1695px, #1b2844 1730px, #182644 1920px); color: #fff; }
.start10 { width: 48px; display: flex; align-items: center; justify-content: center; }
.search10 { width: 288px; height: 40px; background: #f1f1f1; border: 1px solid #bfbfbf; display: flex; align-items: center; padding: 0 12px 0 11px; color: #2b2b2b; font-size: 15px; }
.search10 > span { margin-left: 11px; letter-spacing: -.49px; }
.search10 .ck { margin-right: 6px; }
.apps10 { display: flex; width: 736px; }
.cell10 { position: relative; width: 49px; flex: none; display: flex; align-items: center; justify-content: center; left: 1px; }
.cell10.run { background: linear-gradient(#76b9ed, #76b9ed) 5px 100% / 40px 2px no-repeat; }
.cell10.multi { background: linear-gradient(90deg, #76b9ed 31px, #4d80ac 31px) 5px 100% / 40px 2px no-repeat; }
.cell10.active { background: #b66f38; border-bottom: 2px solid #ff7a00; box-shadow: inset -4px 0 #a5612d; width: 48px; left: 2px; padding-top: 2px; }
.cell10 b { position: absolute; font-size: 11.500px; color: #31a8ff; letter-spacing: -.3px; }
.capture { margin: 14px 0 0 438px; width: 126px; height: 26px; border-radius: 3px 3px 0 0; background: #1b1b1b; display: flex; align-items: center; padding-left: 4px; gap: 8px; }
.capture .pen { margin-right: -3px; }
.tray10 { margin-left: auto; display: flex; align-items: center; width: 178px; font-size: 12.500px; letter-spacing: -.4px; }
.tray10 .tc { margin-right: 11px; }
.eng { width: 24px; margin-left: 1px; }
.time10 { width: 62px; margin-left: 11px; text-align: center; line-height: 18px; }
.time10 span { letter-spacing: -.5px; }
.notif { position: relative; margin-left: 14px; width: 37px; height: 40px; border-right: 1px solid #6c7689; padding: 12px 0 0 1px; }
.notif b { position: absolute; left: 8px; top: 19px; width: 17px; height: 17px; border-radius: 50%; background: #2f343c; border: 1px solid #888; font-weight: 600; font-size: 12px; line-height: 15px; text-align: center; }
</style>
